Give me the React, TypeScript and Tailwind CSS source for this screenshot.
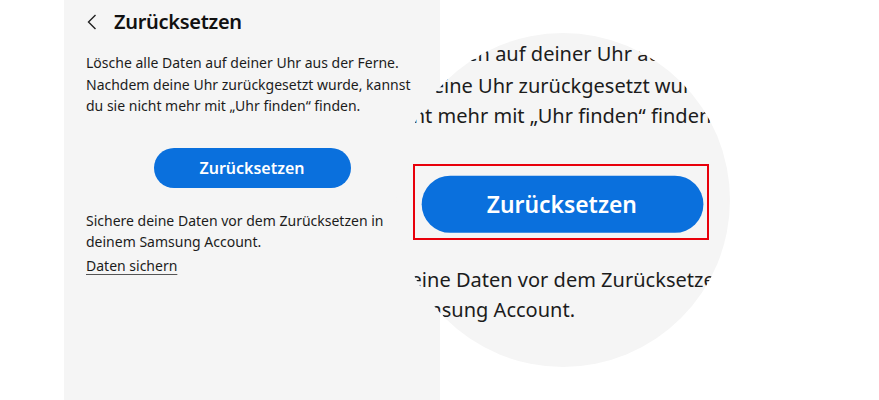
function PanelContent() {
  return (
    <div className="w-[376px] flex flex-col font-['Noto_Sans',sans-serif] text-[#1c1c1c]">
      {/* Header */}
      <div className="h-[44px] flex items-center pl-[23px] gap-[17px]">
        <svg width="10" height="16" viewBox="0 0 10 16" fill="none" className="text-[#222]">
          <polyline points="8.5,1 1.5,8 8.5,15" stroke="currentColor" strokeWidth="1.4" strokeLinejoin="miter" />
        </svg>
        <h1 className="text-[20px] font-semibold text-[#111] tracking-[-0.3px]">Zurücksetzen</h1>
      </div>

      <p className="mt-[8px] px-[22px] text-[14px] leading-[21.5px]">
        Lösche alle Daten auf deiner Uhr aus der Ferne. Nachdem deine Uhr zurückgesetzt wurde, kannst du sie nicht
        mehr mit „Uhr finden“ finden.
      </p>

      <div className="mt-[31px] flex justify-center">
        <button className="w-[197px] h-[40px] rounded-full bg-[#0a70dd] text-white text-[16px] font-semibold">
          Zurücksetzen
        </button>
      </div>

      <p className="mt-[22px] px-[22px] text-[14px] leading-[21.5px]">
        Sichere deine Daten vor dem Zurücksetzen in deinem Samsung Account.
      </p>
      <a className="mt-[3px] ml-[22px] self-start text-[14px] leading-[20px] underline underline-offset-[3px] decoration-[#555]">
        Daten sichern
      </a>
    </div>
  )
}

export default function App() {
  return (
    <div className="relative w-[879px] h-[400px] bg-white overflow-hidden flex">
      <div className="ml-[64px] w-[376px] h-full bg-[#f5f5f5]">
        <PanelContent />
      </div>

      {/* Magnifier */}
      <div className="absolute left-[396px] top-[33px] w-[334px] h-[334px] rounded-full overflow-hidden bg-[#f5f5f5]">
        <div className="absolute left-[-103px] top-[-69px] origin-top-left scale-[1.43]">
          <PanelContent />
        </div>
      </div>

      {/* Highlight */}
      <div className="absolute left-[413px] top-[164px] w-[296px] h-[76px] border-2 border-[#e8000b]" />
    </div>
  )
}
